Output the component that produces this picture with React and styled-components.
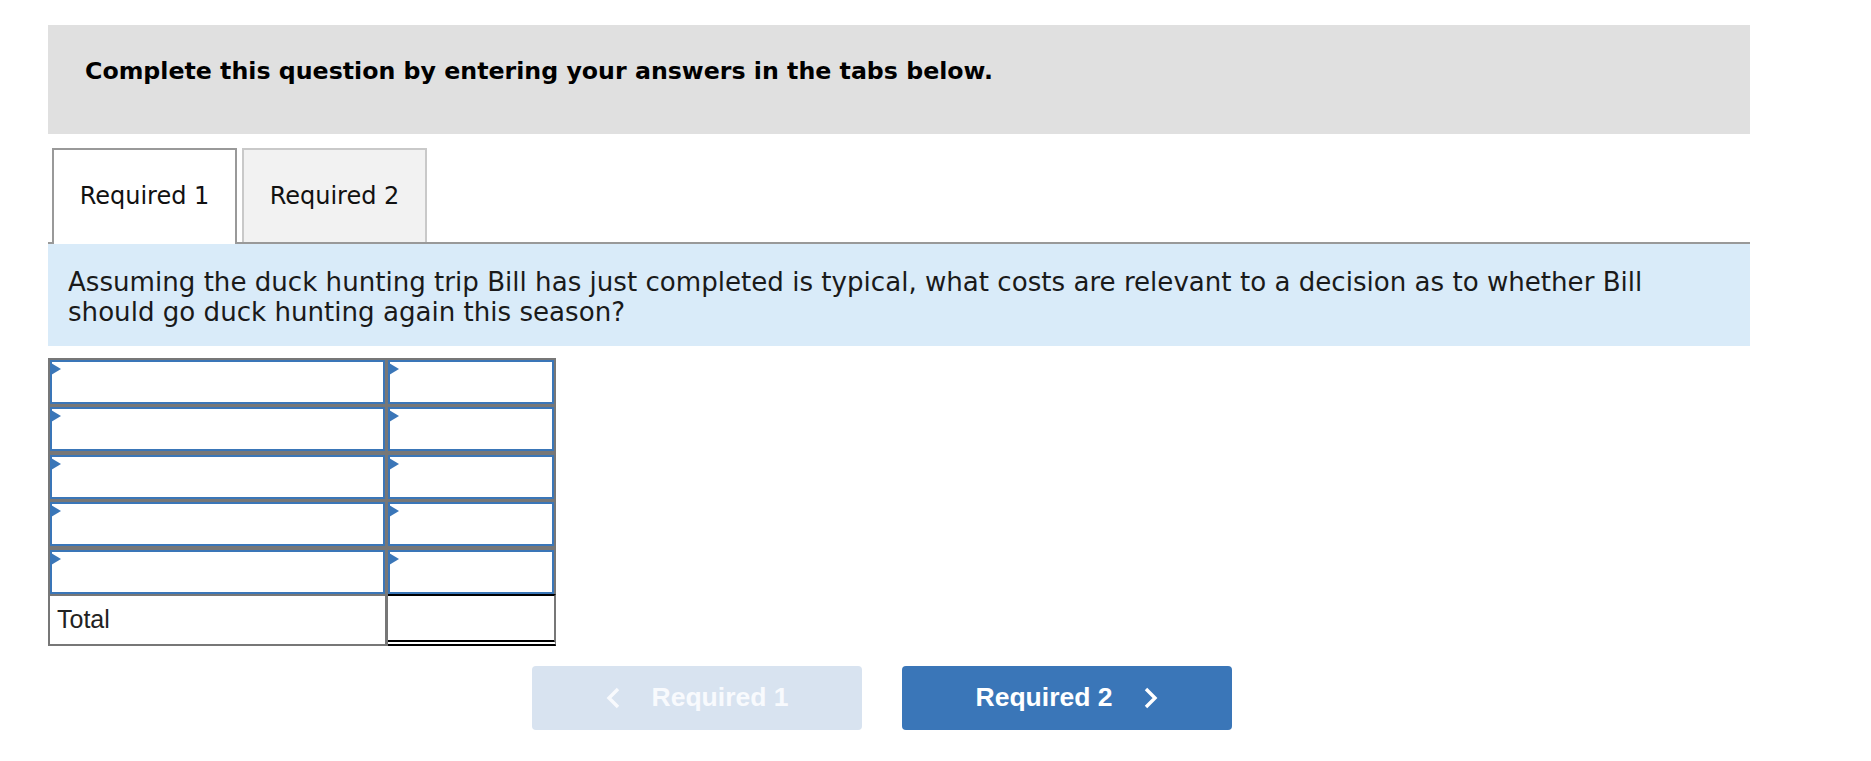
import React from "react";
import styled, { createGlobalStyle } from "styled-components";

const Global = createGlobalStyle`
  html, body { margin: 0; padding: 0; background: #fff; }
  body { font-family: "DejaVu Sans", Verdana, sans-serif; }
  * { box-sizing: border-box; }
`;

const Page = styled.div`
  width: 1871px;
  padding: 25px 0 0 48px;
`;

const Column = styled.div`
  width: 1702px;
  display: flex;
  flex-direction: column;
`;

const Instructions = styled.div`
  height: 109px;
  background: #e0e0e0;
  padding: 32px 0 0 37px;
  font-family: "DejaVu Sans", Verdana, sans-serif;
  font-weight: bold;
  font-size: 23.7px;
  line-height: 28px;
  color: #000;
`;

const TabBar = styled.div`
  margin-top: 14px;
  display: flex;
  align-items: flex-end;
  gap: 5px;
  padding-left: 4px;
  border-bottom: 2px solid #999;
`;

const Tab = styled.div`
  width: 185px;
  height: ${(p) => (p.$active ? "96px" : "94px")};
  margin-bottom: ${(p) => (p.$active ? "-2px" : "0")};
  border: 2px solid ${(p) => (p.$active ? "#999" : "#c9c9c9")};
  border-bottom: 0;
  background: ${(p) => (p.$active ? "#fff" : "#f2f2f2")};
  display: flex;
  align-items: center;
  justify-content: center;
  padding-bottom: ${(p) => (p.$active ? "2px" : "0")};
  font-size: 24px;
  color: #111;
  position: relative;
`;

const Question = styled.div`
  background: #d9ebf9;
  padding: 23px 60px 19px 20px;
  font-size: 26.1px;
  line-height: 30px;
  color: #1a1a1a;
`;

const Sheet = styled.div`
  margin-top: 12px;
  width: 508px;
  display: flex;
  flex-direction: column;
`;

const InputGrid = styled.div`
  display: grid;
  grid-template-columns: 335px 166px;
  grid-auto-rows: 44px;
  gap: 3.4px 3px;
  padding: 2px 2px 0 2px;
  background: #777;
`;

const InputCell = styled.div`
  position: relative;
  background: #fff;
  border: 2px solid #3a76b8;
`;

const Marker = styled.span`
  position: absolute;
  left: -1px;
  top: 1px;
  width: 0;
  height: 0;
  border-left: 10px solid #3a76b8;
  border-top: 6px solid transparent;
  border-bottom: 6px solid transparent;
`;

const TotalRow = styled.div`
  display: grid;
  grid-template-columns: 340px 168px;
  height: 52px;
`;

const TotalLabel = styled.div`
  border: 2px solid #777;
  border-right-width: 3px;
  display: flex;
  align-items: center;
  padding-left: 7px;
  font-family: "Liberation Sans", Arial, sans-serif;
  font-size: 25px;
  color: #222;
`;

const TotalValue = styled.div`
  border-top: 2px solid #000;
  border-right: 2px solid #777;
  border-bottom: 6px double #000;
  background: #fff;
`;

const Nav = styled.div`
  margin-top: 20px;
  padding-left: 484px;
  display: flex;
  gap: 40px;
`;

const NavButton = styled.button`
  width: 330px;
  height: 64px;
  border: 0;
  border-radius: 4px;
  background: ${(p) => (p.$disabled ? "#d8e3f0" : "#3a76b8")};
  color: ${(p) => (p.$disabled ? "#f8fafd" : "#fff")};
  font-family: "Liberation Sans", Arial, sans-serif;
  font-weight: bold;
  font-size: 26.5px;
  display: flex;
  align-items: center;
  justify-content: center;
  gap: 32px;
  padding: 0;
  cursor: ${(p) => (p.$disabled ? "default" : "pointer")};
`;

const Chevron = ({ dir }) => (
  <svg width="14" height="22" viewBox="0 0 14 22" aria-hidden="true">
    <polyline
      points={dir === "left" ? "12,2 3,11 12,20" : "2,2 11,11 2,20"}
      fill="none"
      stroke="currentColor"
      strokeWidth="3.4"
      strokeLinejoin="miter"
    />
  </svg>
);

export default function App() {
  const rows = [0, 1, 2, 3, 4];
  return (
    <>
      <Global />
      <Page>
        <Column>
          <Instructions>
            Complete this question by entering your answers in the tabs below.
          </Instructions>
          <TabBar>
            <Tab $active>Required 1</Tab>
            <Tab>Required 2</Tab>
          </TabBar>
          <Question>
            Assuming the duck hunting trip Bill has just completed is typical,
            what costs are relevant to a decision as to whether Bill should go
            duck hunting again this season?
          </Question>
          <Sheet>
            <InputGrid>
              {rows.map((r) => (
                <React.Fragment key={r}>
                  <InputCell>
                    <Marker />
                  </InputCell>
                  <InputCell>
                    <Marker />
                  </InputCell>
                </React.Fragment>
              ))}
            </InputGrid>
            <TotalRow>
              <TotalLabel>Total</TotalLabel>
              <TotalValue />
            </TotalRow>
          </Sheet>
          <Nav>
            <NavButton $disabled>
              <Chevron dir="left" />
              Required 1
            </NavButton>
            <NavButton>
              Required 2
              <Chevron dir="right" />
            </NavButton>
          </Nav>
        </Column>
      </Page>
    </>
  );
}
